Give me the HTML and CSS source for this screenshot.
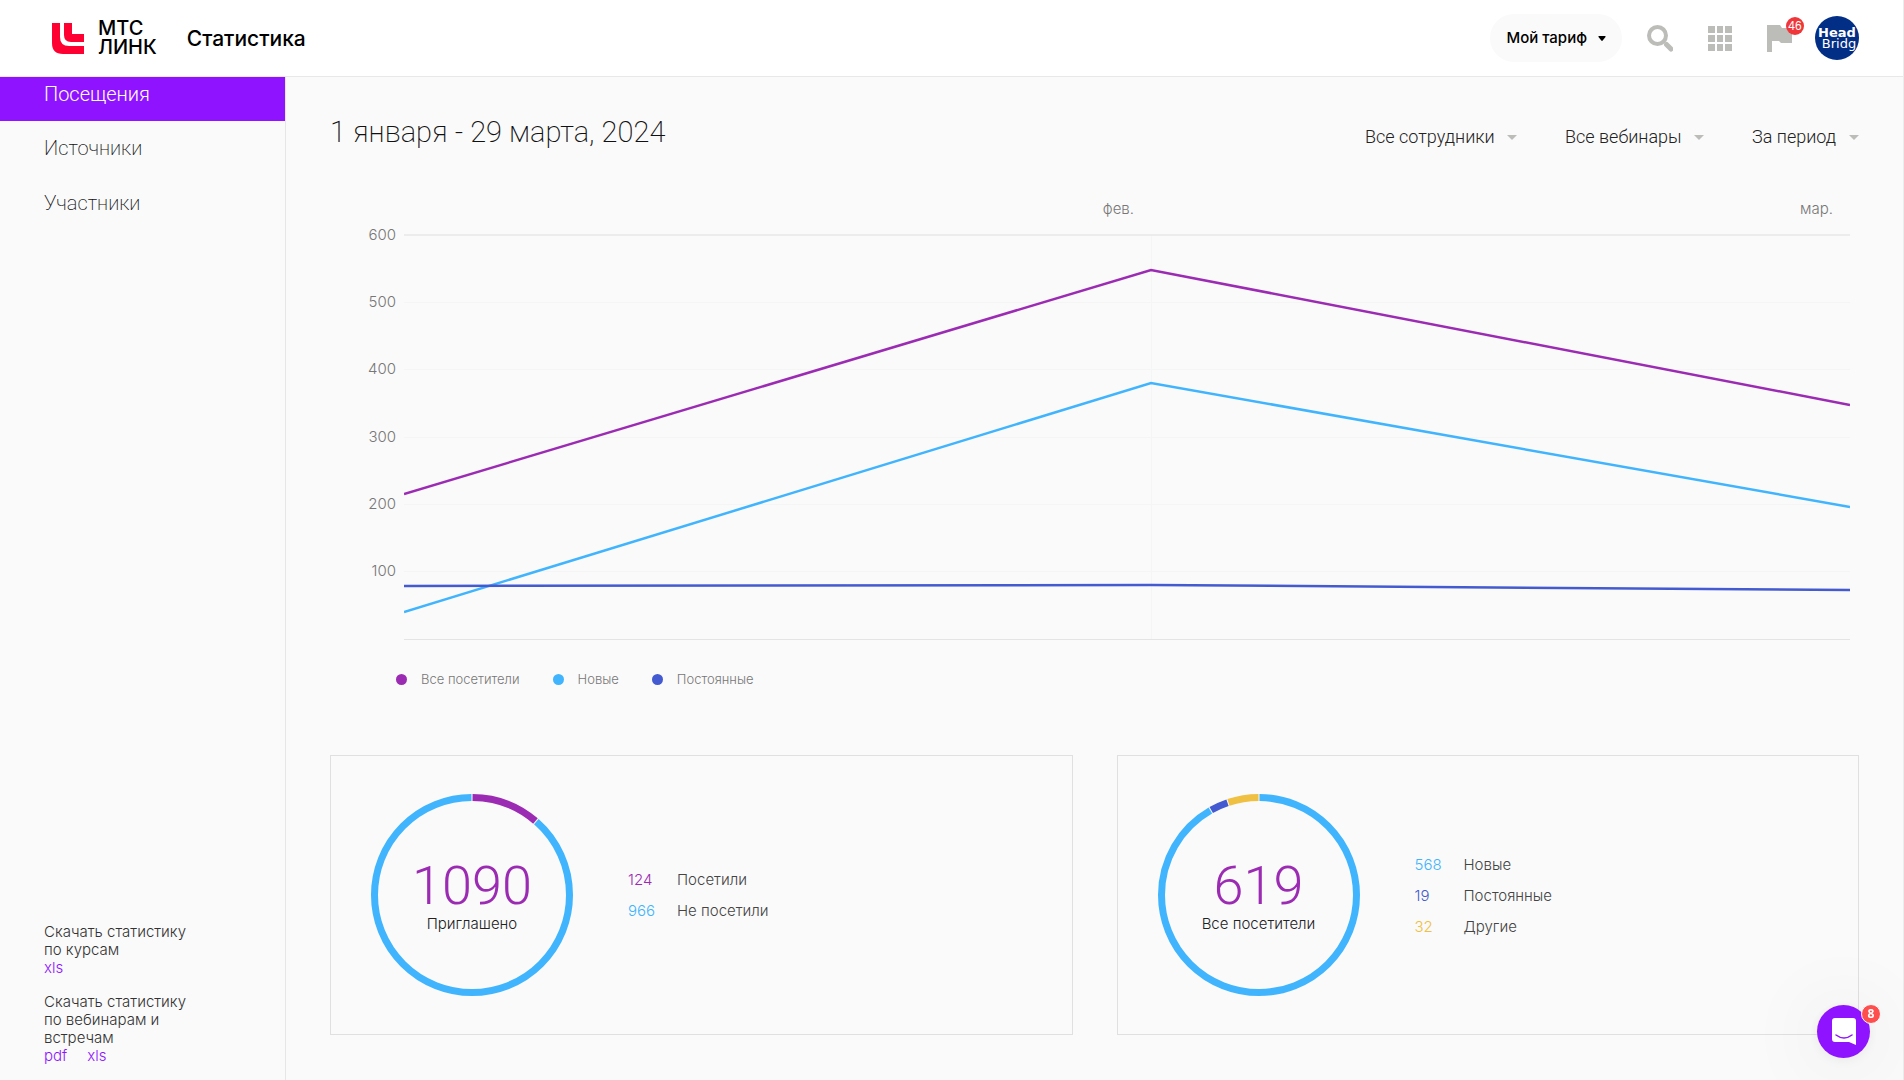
FILE: index.html
```html
<!DOCTYPE html>
<html lang="ru">
<head>
<meta charset="utf-8">
<meta name="viewport" content="width=device-width, initial-scale=1">
<title>Статистика — МТС Линк</title>
<link rel="stylesheet" href="styles.css">
</head>
<body>
<header class="header">
  <a class="logo" href="#">
    <svg class="logo-mark" viewBox="0 0 32 31" aria-hidden="true">
      <path fill="#ff0032" d="M0 0h8v14q0 9 9 9h15v8H11Q0 31 0 20z"/>
      <path fill="#ff0032" d="M12 0h8v11h12v8H19q-7 0-7-7z"/>
    </svg>
    <span class="logo-text"><span>МТС</span><span>ЛИНК</span></span>
  </a>
  <h1 class="title">Статистика</h1>
  <button class="tariff" type="button">Мой тариф
    <svg class="tariff-arrow" viewBox="0 0 8 5" aria-hidden="true"><path d="M1 0h6q1 0 .5 1L4.700 4.600q-.7.7-1.400 0L.5 1Q0 0 1 0z"/></svg>
  </button>
  <div class="tools">
    <button class="tool" type="button" aria-label="Поиск">
      <svg viewBox="0 0 26 27"><circle cx="10.500" cy="10.500" r="8.500" fill="none" stroke="#bcbcb9" stroke-width="4"/><path d="M19.500 19.500l4.500 4.500" fill="none" stroke="#bcbcb9" stroke-width="5" stroke-linecap="round"/></svg>
    </button>
    <button class="tool" type="button" aria-label="Сервисы">
      <svg viewBox="0 0 26 27" fill="#bcbcb9"><path d="M1 1h7v7H1zM10 1h6v7h-6zM18 1h7v7h-7zM1 10h7v7H1zM10 10h6v7h-6zM18 10h7v7h-7zM1 19h7v7H1zM10 19h6v7h-6zM18 19h7v7h-7z"/></svg>
    </button>
    <button class="tool" type="button" aria-label="Уведомления">
      <svg viewBox="0 0 26 27" fill="#bcbcb9"><path d="M0 0h13l2 3h10v15H14l-2-2H5v11H0z"/></svg>
      <span class="badge">46</span>
    </button>
  </div>
  <button class="avatar" type="button"><b>Head</b><span>Bridg</span></button>
</header>

<div class="page">
  <aside class="sidebar">
    <nav class="menu">
      <a class="menu-item menu-item-active" href="#">Посещения</a>
      <a class="menu-item" href="#">Источники</a>
      <a class="menu-item" href="#">Участники</a>
    </nav>
    <div class="downloads">
      <div>
        <p>Скачать статистику по курсам</p>
        <div class="files"><a href="#">xls</a></div>
      </div>
      <div>
        <p>Скачать статистику по вебинарам и встречам</p>
        <div class="files"><a href="#">pdf</a><a href="#">xls</a></div>
      </div>
    </div>
  </aside>

  <main class="main">
    <div class="toolbar">
      <h2 class="range">1 января - 29 марта, 2024</h2>
      <div class="filters">
        <label class="filter"><select aria-label="Сотрудники"><option>Все сотрудники</option></select></label>
        <label class="filter"><select aria-label="Вебинары"><option>Все вебинары</option></select></label>
        <label class="filter"><select aria-label="Период"><option>За период</option></select></label>
      </div>
    </div>

    <section class="chart">
      <div class="months"><span>фев.</span><span>мар.</span></div>
      <div class="scale"><span>600</span><span>500</span><span>400</span><span>300</span><span>200</span><span>100</span></div>
      <svg class="plot" viewBox="0 0 1446 406" preserveAspectRatio="none" aria-hidden="true">
        <g stroke="#f5f5f5">
          <path d="M0 68.500H1446M0 135.500H1446M0 203.500H1446M0 270.500H1446M0 337.500H1446M747.500 2V405"/>
        </g>
        <path stroke="#ececec" stroke-width="2" d="M0 1H1446"/>
        <path stroke="#e4e4e4" d="M0 405.500H1446"/>
        <g fill="none" stroke-width="2.500">
          <path stroke="#9c2bb3" d="M0 260L747 36L1446 171"/>
          <path stroke="#41b4fe" d="M0 378L747 149L1446 273"/>
          <path stroke="#435ad0" d="M0 352L747 351L1446 356"/>
        </g>
      </svg>
    </section>
    <ul class="legend">
      <li class="all">Все посетители</li>
      <li class="new">Новые</li>
      <li class="regular">Постоянные</li>
    </ul>

    <div class="cards">
      <section class="card">
        <div class="donut">
          <svg viewBox="0 0 202 202" aria-hidden="true">
            <g fill="none" stroke-width="7" transform="rotate(-90 101 101)">
              <circle cx="101" cy="101" r="97.500" pathLength="1090" stroke="#9c2bb3" stroke-dasharray="122 968" stroke-dashoffset="-1"/>
              <circle cx="101" cy="101" r="97.500" pathLength="1090" stroke="#41b4fe" stroke-dasharray="964 126" stroke-dashoffset="-125"/>
            </g>
          </svg>
          <div class="donut-text"><strong>1090</strong><span>Приглашено</span></div>
        </div>
        <dl class="values">
          <dt class="c-all">124</dt><dd>Посетили</dd>
          <dt class="c-new">966</dt><dd>Не посетили</dd>
        </dl>
      </section>
      <section class="card">
        <div class="donut">
          <svg viewBox="0 0 202 202" aria-hidden="true">
            <g fill="none" stroke-width="7" transform="rotate(-90 101 101)">
              <circle cx="101" cy="101" r="97.500" pathLength="619" stroke="#41b4fe" stroke-dasharray="567 52" stroke-dashoffset="-.5"/>
              <circle cx="101" cy="101" r="97.500" pathLength="619" stroke="#435ad0" stroke-dasharray="18 601" stroke-dashoffset="-568.500"/>
              <circle cx="101" cy="101" r="97.500" pathLength="619" stroke="#efc042" stroke-dasharray="31 588" stroke-dashoffset="-587.500"/>
            </g>
          </svg>
          <div class="donut-text"><strong>619</strong><span>Все посетители</span></div>
        </div>
        <dl class="values">
          <dt class="c-new">568</dt><dd>Новые</dd>
          <dt class="c-regular">19</dt><dd>Постоянные</dd>
          <dt class="c-other">32</dt><dd>Другие</dd>
        </dl>
      </section>
    </div>
  </main>
</div>

<button class="chat" type="button" aria-label="Чат поддержки">
  <svg viewBox="0 0 24 27" aria-hidden="true"><path fill="#fff" d="M3 0h18q3 0 3 3v24l-7-3H3q-3 0-3-3V3q0-3 3-3z"/><path d="M4 17q8 6 16 0" fill="none" stroke="#8f13ff" stroke-width="1.500" stroke-linecap="round"/></svg>
  <span class="chat-badge">8</span>
</button>
</body>
</html>
```
FILE: styles.css
```css
* { box-sizing: border-box; }

body {
  margin: 0;
  min-height: 100vh;
  display: flex;
  flex-direction: column;
  background: #fafafa;
  border-right: 1px solid #ececec;
  color: #222;
  font: 300 15px/18px Inter, "Liberation Sans", sans-serif;
}

h1, h2, p, ul, dl, dd { margin: 0; }
ul { padding: 0; list-style: none; }
a { text-decoration: none; }

button, select {
  border: 0;
  padding: 0;
  background: none;
  color: inherit;
  font: inherit;
}

/* Header */
.header {
  display: flex;
  align-items: center;
  height: 77px;
  padding: 0 44px 0 52px;
  background: #fff;
  border-bottom: 1px solid #e8e8e8;
}

.logo {
  display: flex;
  align-items: center;
  gap: 14px;
  color: #000;
}
.logo-mark { width: 32px; height: 31px; }
.logo-text {
  display: flex;
  flex-direction: column;
  font: 500 20px/19px Inter, sans-serif;
}

.title {
  margin: 2px auto 0 30px;
  color: #000;
  font: 500 21px/28px Inter, sans-serif;
}

.tariff {
  display: flex;
  align-items: center;
  gap: 11px;
  height: 48px;
  padding: 0 16px;
  border-radius: 24px;
  background: #fafafa;
  color: #000;
  font-weight: 500;
}
.tariff-arrow { width: 8px; height: 5px; }

.tools {
  display: flex;
  gap: 34px;
  margin: 0 22px 0 25px;
}
.tool { position: relative; width: 26px; height: 27px; }
.tool svg { display: block; }

.badge {
  position: absolute;
  top: -8px;
  left: 19px;
  width: 18px;
  border-radius: 9px;
  background: #f03639;
  color: #fff;
  font: 400 12px/18px "Liberation Sans", sans-serif;
}

.avatar {
  display: flex;
  flex-direction: column;
  align-items: center;
  justify-content: center;
  width: 44px;
  height: 44px;
  border-radius: 50%;
  overflow: hidden;
  background: #022e86;
  color: #fff;
  font: 13px/11px "DejaVu Sans", sans-serif;
}
.avatar span { padding-left: 4px; }

/* Layout */
.page { display: flex; flex: 1; }

.sidebar {
  display: flex;
  flex-direction: column;
  justify-content: space-between;
  flex: 0 0 286px;
  padding-bottom: 15px;
  border-right: 1px solid #e6e6e6;
}

.menu-item {
  display: block;
  padding-left: 44px;
  color: #111;
  font: 200 20px/55px Roboto, sans-serif;
}
.menu-item-active {
  padding-bottom: 10px;
  background: #8f13ff;
  color: #fff;
  font-weight: 300;
  line-height: 34px;
}

.downloads {
  display: flex;
  flex-direction: column;
  gap: 16px;
  width: 200px;
  padding-left: 44px;
  color: #333;
}
.files { display: flex; gap: 20px; }
.files a { color: #8f13ff; }

.main { flex: 1; padding: 35px 44px 44px; }

.toolbar {
  display: flex;
  align-items: flex-end;
  justify-content: space-between;
}
.range {
  color: #111;
  font: 200 29px/40px Roboto, sans-serif;
}

.filters { display: flex; gap: 48px; }
.filter { display: flex; align-items: center; gap: 12px; }
.filter::after {
  content: "";
  border: 5px solid transparent;
  border-top-color: #bcbcb9;
  border-bottom: 0;
}
.filter select {
  appearance: none;
  height: 30px;
  font: 300 18px/30px Roboto, sans-serif;
}

/* Chart */
.chart {
  display: grid;
  grid-template-columns: 66px 1fr;
  gap: 16px 8px;
  margin: 48px 9px 0 0;
  color: #777;
}
.months {
  grid-column: 2;
  display: grid;
  grid-template-columns: 747fr 699fr;
  text-align: right;
}
.months span { padding-right: 17px; }
.scale {
  display: flex;
  flex-direction: column;
  justify-content: space-between;
  height: 354px;
  margin-top: -8px;
  text-align: right;
}
.plot { display: block; width: 100%; height: 406px; }

.legend {
  display: flex;
  gap: 33px;
  margin: 30px 0 67px 66px;
  color: #777;
  font-size: 13px;
}
.legend li { display: flex; align-items: center; gap: 14px; }
.legend li::before {
  content: "";
  width: 11px;
  height: 11px;
  border-radius: 50%;
}
.legend .all::before { background: #9c2bb3; }
.legend .new::before { background: #41b4fe; }
.legend .regular::before { background: #435ad0; }

/* Cards */
.cards {
  display: grid;
  grid-template-columns: 1fr 1fr;
  gap: 44px;
}
.card {
  display: flex;
  align-items: center;
  gap: 55px;
  padding: 38px 40px;
  border: 1px solid #e0e0e0;
}

.donut { display: grid; flex: none; place-items: center; }
.donut > * { grid-area: 1 / 1; }
.donut svg { display: block; width: 202px; height: 202px; }
.donut-text {
  display: flex;
  flex-direction: column;
  align-items: center;
}
.donut-text strong {
  color: #9c2bb3;
  font: 300 54px/58px Roboto, sans-serif;
}

.values {
  display: grid;
  grid-template-columns: 49px auto;
  color: #444;
  line-height: 31px;
}
.c-all { color: #9c2bb3; }
.c-new { color: #41b4fe; }
.c-regular { color: #435ad0; }
.c-other { color: #efc042; }

/* Support chat */
.chat {
  position: fixed;
  right: 34px;
  bottom: 22px;
  display: grid;
  place-items: center;
  width: 53px;
  height: 53px;
  border-radius: 50%;
  background: #8f13ff;
  box-shadow: 0 2px 12px rgba(0, 0, 0, .06), 0 4px 80px rgba(0, 0, 0, .1);
}
.chat svg { width: 24px; height: 27px; }
.chat-badge {
  position: absolute;
  top: -1px;
  right: -11px;
  width: 20px;
  border: 1px solid #fafafa;
  border-radius: 10px;
  background: #ff4e4e;
  color: #fff;
  font: 700 12px/18px "Open Sans", sans-serif;
}
```
